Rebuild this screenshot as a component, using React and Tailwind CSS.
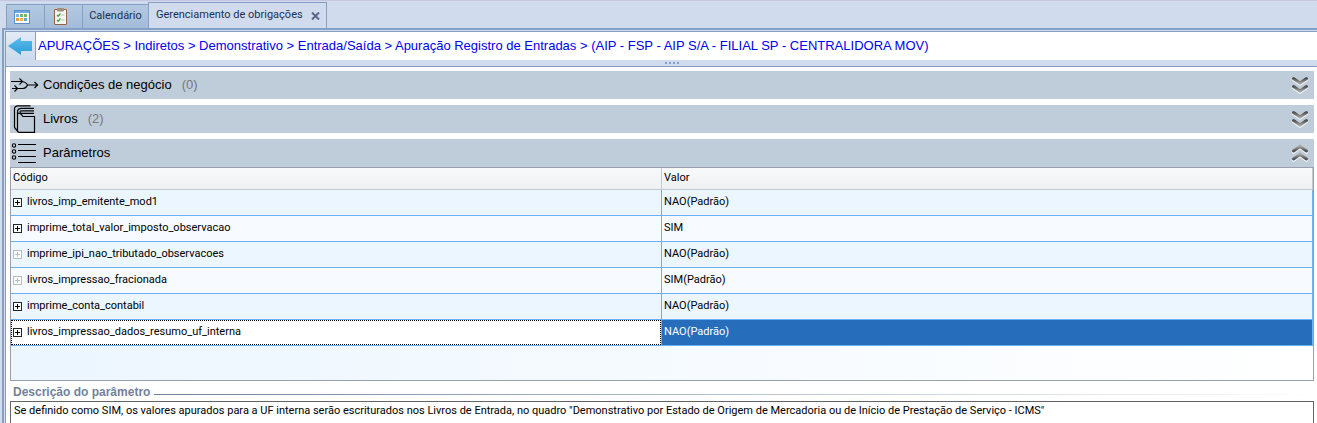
import { useState } from 'react'

const CRUMBS =
  'APURAÇÕES > Indiretos > Demonstrativo > Entrada/Saída > Apuração Registro de Entradas > (AIP - FSP - AIP S/A - FILIAL SP - CENTRALIDORA MOV)'

const PARAMS = [
  { code: 'livros_imp_emitente_mod1', value: 'NAO(Padrão)' },
  { code: 'imprime_total_valor_imposto_observacao', value: 'SIM' },
  { code: 'imprime_ipi_nao_tributado_observacoes', value: 'NAO(Padrão)', disabled: true },
  { code: 'livros_impressao_fracionada', value: 'SIM(Padrão)', disabled: true },
  { code: 'imprime_conta_contabil', value: 'NAO(Padrão)' },
  { code: 'livros_impressao_dados_resumo_uf_interna', value: 'NAO(Padrão)' },
]

function CalendarIcon() {
  return (
    <svg width="16" height="14" viewBox="0 0 16 14" shapeRendering="crispEdges">
      <rect x="0.5" y="0.5" width="15" height="13" fill="#fff" stroke="#5b8fc9" />
      <rect x="1" y="1" width="14" height="2" fill="#6fa8e0" />
      <rect x="2" y="4" width="3" height="3" fill="#7db4e6" />
      <rect x="6" y="4" width="3" height="3" fill="#74b566" />
      <rect x="10" y="4" width="3" height="3" fill="#74b566" />
      <rect x="2" y="8" width="3" height="3" fill="#ee9a3c" />
      <rect x="6" y="8" width="3" height="3" fill="#f0b840" />
      <rect x="10" y="8" width="3" height="3" fill="#5aa5e8" />
    </svg>
  )
}

function ClipboardIcon() {
  return (
    <svg width="13" height="17" viewBox="0 0 13 17" fill="none">
      <rect x="0.5" y="1.5" width="12" height="15" rx="0.5" fill="#f6f7f2" stroke="#96623f" />
      <rect x="3" y="0" width="7" height="3.5" rx="1" fill="#a08d80" />
      <path d="M3 7l1.200 1.200L6.500 5.500M3 12l1.200 1.200L6.500 10.500" stroke="#3fa045" strokeWidth="1.300" />
      <path d="M7.500 7h3M7.500 12h3" stroke="#b4b9bd" />
    </svg>
  )
}

function BackIcon() {
  return (
    <svg width="24" height="18" viewBox="0 0 24 18">
      <defs>
        <linearGradient id="back" x1="0" y1="0" x2="0" y2="1">
          <stop offset="0" stopColor="#5cbcec" />
          <stop offset="1" stopColor="#2f9bd8" />
        </linearGradient>
      </defs>
      <path d="M0 9L13 0v4h11v10H13v4z" fill="url(#back)" />
    </svg>
  )
}

function MergeIcon() {
  return (
    <svg width="28" height="18" viewBox="0 0 28 18" fill="none" stroke="#000" strokeWidth="1.2">
      <path d="M0 5.500h10c3.500 0 5.500 1.500 6.500 3.500-1 2.500-3 3.500-5.500 3.500H1M16.500 9H27" />
      <path d="M8.500 2.500l3 3-3 3M3.500 9.500l3 3-3 3M23.500 6l3 3-3 3" />
    </svg>
  )
}

function BooksIcon() {
  return (
    <svg width="25" height="28" viewBox="0 0 25 28" fill="none" stroke="#000" strokeWidth="1.2">
      <path d="M19.500.8H7C4.500.8 3.500 2 3.500 4v18.500l3 3.500" />
      <path d="M23 3.300H10.500c-2.500 0-4 1.500-4 3.700v18.500c0 1.300.8 1.900 2 1.900h15V11.500H12c-1-.5-1-3-3.500-3-1 0-2-.7-2-1.500" />
      <path d="M23 5.800H10.500c-2 0-2 2.600 0 2.600H23" />
    </svg>
  )
}

function ListIcon() {
  return (
    <svg width="26" height="22" viewBox="0 0 26 22" fill="none" stroke="#000">
      <g strokeWidth="1.1">
        <circle cx="3" cy="3.500" r="1.700" />
        <circle cx="3" cy="9.500" r="1.700" />
        <circle cx="3" cy="15.500" r="1.700" />
      </g>
      <path d="M7 2.500h18M7 8.500h18M7 14.500h18M7 20.500h18" strokeWidth="1.200" />
    </svg>
  )
}

function Chevrons({ up }) {
  const paths = up ? ['M2.500 7L9 2.500 15.500 7', 'M2.500 15L9 10.500 15.500 15'] : ['M2.500 2.500L9 7l6.500-4.500', 'M2.500 10.500L9 15l6.500-4.500']
  return (
    <svg width="18" height="18" viewBox="0 0 18 18" fill="none" strokeWidth="3" strokeLinecap="round">
      <defs>
        <linearGradient id="chevDown" x1="0" y1="0" x2="0" y2="1">
          <stop offset="0" stopColor="#505050" />
          <stop offset="1" stopColor="#a0a0a0" />
        </linearGradient>
        <linearGradient id="chevUp" x1="0" y1="1" x2="0" y2="0">
          <stop offset="0" stopColor="#505050" />
          <stop offset="1" stopColor="#a0a0a0" />
        </linearGradient>
      </defs>
      {paths.map((d) => (
        <g key={d}>
          <path d={d} stroke="#f2f4f6" transform="translate(0 1.3)" />
          <path d={d} stroke={up ? 'url(#chevUp)' : 'url(#chevDown)'} />
        </g>
      ))}
    </svg>
  )
}

function Section({ icon, title, count, open, onToggle }) {
  return (
    <button
      type="button"
      aria-expanded={open}
      onClick={onToggle}
      className="flex h-7 w-full items-center bg-[#bfccda] pr-[5px] text-left font-['Liberation_Sans',Arial,sans-serif] text-[13px] text-black"
    >
      <span className="flex w-[33px] shrink-0 pl-px">{icon}</span>
      <span>{title}</span>
      {count !== undefined && <span className="ml-2.5 text-[#75797e]">({count})</span>}
      <span className="ml-auto">
        <Chevrons up={open} />
      </span>
    </button>
  )
}

function ExpandBox({ disabled }) {
  return (
    <button
      type="button"
      aria-label="Expandir"
      disabled={disabled}
      className={`flex size-[9px] shrink-0 items-center justify-center border bg-white ${
        disabled ? 'border-[#b9bcc0] text-[#b9bcc0]' : 'border-[#202530] text-black'
      }`}
    >
      <svg width="5" height="5" viewBox="0 0 5 5" stroke="currentColor" shapeRendering="crispEdges">
        <path d="M0 2.500h5M2.500 0v5" />
      </svg>
    </button>
  )
}

export default function App() {
  const [selected, setSelected] = useState(5)
  const [open, setOpen] = useState({ cond: false, livros: false, params: true })

  const toggle = (key) => setOpen({ ...open, [key]: !open[key] })

  return (
    <div className="flex h-screen min-w-0 flex-col overflow-hidden border-t border-[#c5c8e0] bg-[#d0dcee] font-[Roboto,Tahoma,sans-serif] text-[11px] text-black">
      {/* Tabs */}
      <div className="flex h-[27px] shrink-0 items-end pl-1.5 text-[#1e2f50]">
        <button
          type="button"
          aria-label="Agenda"
          className="flex h-6 w-[39px] items-center border border-b-0 border-[#869fc4] bg-linear-to-b from-[#b4c9e1] to-[#a3bbd9] pl-[7px]"
        >
          <CalendarIcon />
        </button>
        <button
          type="button"
          aria-label="Tarefas"
          className="flex h-6 w-[38px] items-center border-t border-r border-[#869fc4] bg-linear-to-b from-[#b4c9e1] to-[#a3bbd9] pl-[9px]"
        >
          <ClipboardIcon />
        </button>
        <button
          type="button"
          className="h-6 w-[65px] border-t border-[#869fc4] bg-linear-to-b from-[#b4c9e1] to-[#a3bbd9] whitespace-nowrap"
        >
          Calendário
        </button>
        <div className="flex h-[26px] w-[179px] items-center justify-between border border-b-0 border-[#869fc4] bg-[#d0dcee] pr-1.5 pl-[7px]">
          <button type="button" className="whitespace-nowrap">
            Gerenciamento de obrigações
          </button>
          <button type="button" aria-label="Fechar" className="text-[#5a6684]">
            <svg width="9" height="8" viewBox="0 0 9 8" stroke="currentColor" strokeWidth="2">
              <path d="M1 .5l7 7M8 .5l-7 7" />
            </svg>
          </button>
        </div>
      </div>

      <div className="ml-0.5 flex min-h-0 flex-1 flex-col border-t-2 border-l-2 border-[#869fc4]">
        <div className="mt-px ml-px flex min-h-0 flex-1 flex-col border-t border-l border-[#869fc4]">
          {/* Breadcrumb */}
          <div className="flex h-7 shrink-0 bg-white">
            <button
              type="button"
              aria-label="Voltar"
              className="flex w-[30px] items-center border-r border-[#869fc4] bg-linear-to-b from-[#e3ebf6] to-[#cbdaee] pl-0.5"
            >
              <BackIcon />
            </button>
            <p className="flex items-center pl-0.5 font-['Liberation_Sans',Arial,sans-serif] text-[13px] whitespace-nowrap text-[#0000f0]">
              {CRUMBS}
            </p>
          </div>

          {/* Splitter */}
          <div className="flex h-1.5 shrink-0 items-center justify-center gap-0.5 pl-5">
            <span className="size-0.5 bg-[#869fc4]" />
            <span className="size-0.5 bg-[#869fc4]" />
            <span className="size-0.5 bg-[#869fc4]" />
            <span className="size-0.5 bg-[#869fc4]" />
          </div>

          <main className="flex min-h-0 flex-1 flex-col border-t border-[#869fc4] bg-white pt-1 pr-[3px] pl-1">
            <div className="flex shrink-0 flex-col gap-1.5">
              <Section
                icon={<MergeIcon />}
                title="Condições de negócio"
                count={0}
                open={open.cond}
                onToggle={() => toggle('cond')}
              />
              <Section
                icon={<BooksIcon />}
                title="Livros"
                count={2}
                open={open.livros}
                onToggle={() => toggle('livros')}
              />
              <Section
                icon={<ListIcon />}
                title="Parâmetros"
                open={open.params}
                onToggle={() => toggle('params')}
              />
            </div>

            {open.params && (
              <div className="h-[214px] shrink-0 border border-[#9a9fb0] bg-linear-to-r from-[#ecf6ff] to-white">
                <table className="w-full table-fixed border-separate border-spacing-0 text-left">
                  <thead>
                    <tr className="h-[22px] bg-linear-to-b from-[#f8f9fa] to-[#eff0f2]">
                      <th className="w-1/2 border-r border-b border-[#c5c8ce] p-0 pl-0.5 font-normal">Código</th>
                      <th className="border-r border-b border-[#c5c8ce] p-0 pl-0.5 font-normal">Valor</th>
                    </tr>
                  </thead>
                  <tbody>
                    {PARAMS.map((p, i) => {
                      const active = i === selected
                      return (
                        <tr
                          key={p.code}
                          onClick={() => setSelected(i)}
                          className={`h-[26px] ${i % 2 === 0 ? 'bg-[#ebf6ff]' : 'bg-[#f7faff]'}`}
                        >
                          <td className={`border-r border-b border-[#6bb1f2] p-0 ${active ? 'bg-white' : ''}`}>
                            <div
                              className={`flex h-[25px] items-center gap-[5px] border pl-px ${
                                active ? 'border-dotted border-black' : 'border-transparent'
                              }`}
                            >
                              <ExpandBox disabled={p.disabled} />
                              <span>{p.code}</span>
                            </div>
                          </td>
                          <td
                            className={`border-r border-b border-[#6bb1f2] p-0 pl-0.5 ${
                              active ? 'bg-[#266dbc] text-white' : ''
                            }`}
                          >
                            {p.value}
                          </td>
                        </tr>
                      )
                    })}
                  </tbody>
                </table>
              </div>
            )}

            {/* Description */}
            <div className="flex h-5 shrink-0 items-center gap-1 pt-0.5 pl-[3px]">
              <label
                htmlFor="descricao"
                className="font-['Liberation_Sans',Arial,sans-serif] text-[12px] font-bold whitespace-nowrap text-[#72829c]"
              >
                Descrição do parâmetro
              </label>
              <span className="mt-1 h-px flex-1 bg-linear-to-r from-[#72829c] to-white" />
            </div>
            <textarea
              id="descricao"
              readOnly
              className="block min-h-0 w-full flex-1 resize-none overflow-hidden border border-b-0 border-[#626468] bg-white px-[3px] py-px leading-4 outline-none"
              defaultValue={
                'Se definido como SIM, os valores apurados para a UF interna serão escriturados nos Livros de Entrada, no quadro "Demonstrativo por Estado de Origem de Mercadoria ou de Início de Prestação de Serviço - ICMS"'
              }
            />
          </main>
        </div>
      </div>
    </div>
  )
}
